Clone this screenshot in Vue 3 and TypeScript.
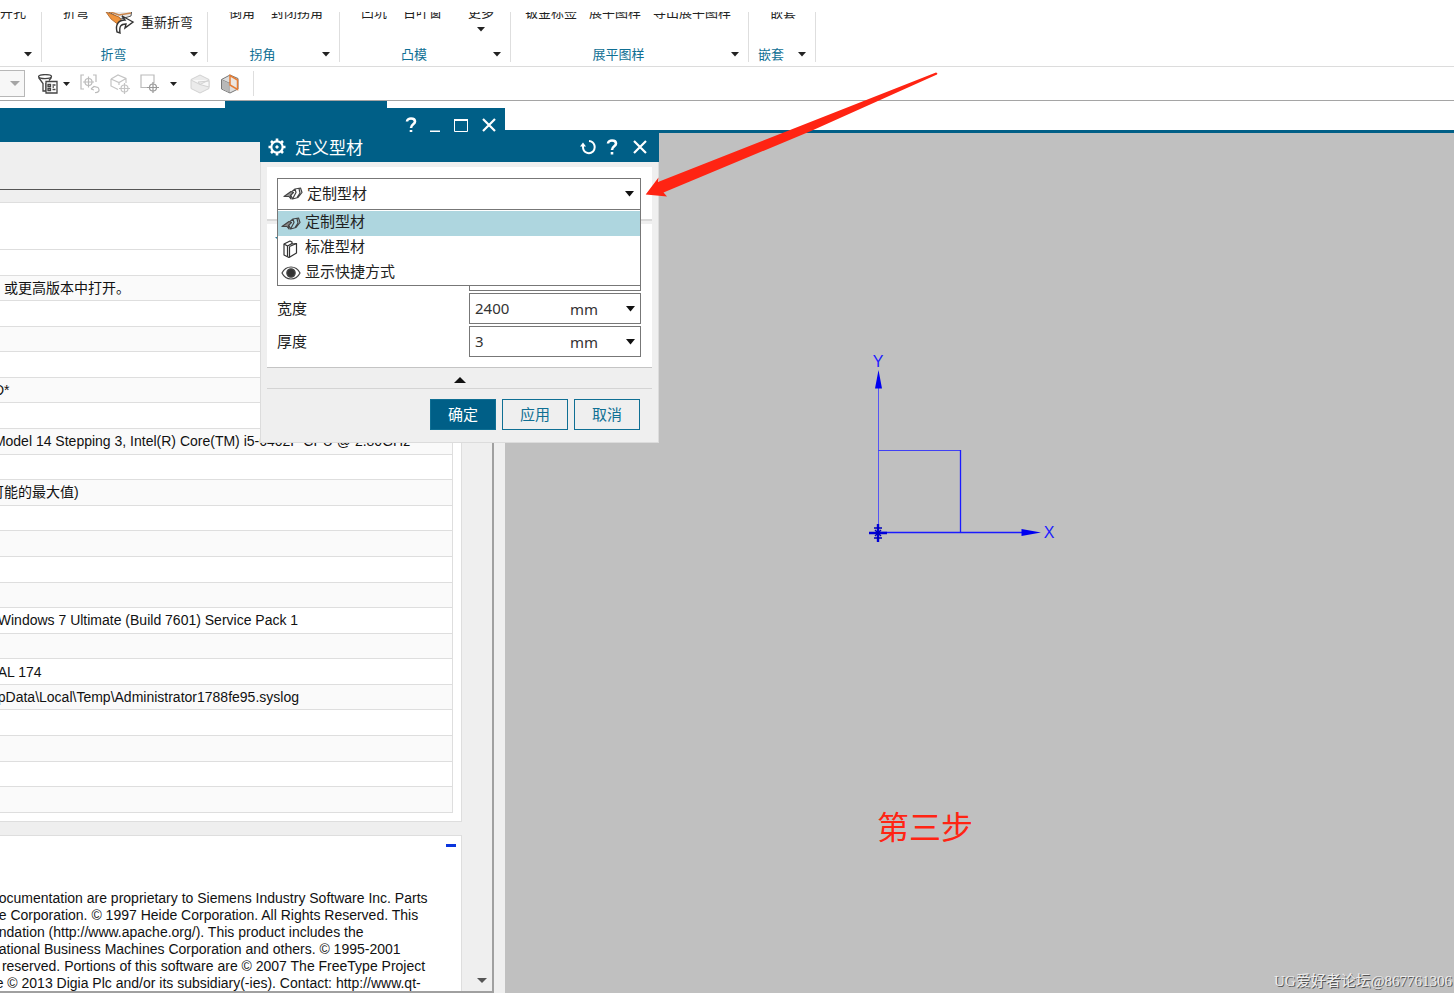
<script setup lang="ts">
import { ref } from 'vue'

interface Tool {
  label: string
  kind?: 'icon' | 'more'
}
interface Group {
  id: string
  title: string
  tools: Tool[]
}

const groups: Group[] = [
  { id: 'hole', title: '', tools: [{ label: '开孔' }] },
  { id: 'bend', title: '折弯', tools: [{ label: '折弯' }, { label: '重新折弯', kind: 'icon' }] },
  { id: 'corner', title: '拐角', tools: [{ label: '倒角' }, { label: '封闭拐角' }] },
  { id: 'punch', title: '凸模', tools: [{ label: '凹坑' }, { label: '百叶窗' }, { label: '更多', kind: 'more' }] },
  { id: 'flat', title: '展平图样', tools: [{ label: '钣金标签' }, { label: '展平图样' }, { label: '导出展平图样' }] },
  { id: 'nest', title: '嵌套', tools: [{ label: '嵌套' }] },
]

const nb = '\u00a0'
const rows: string[] = [
  '', '，或更高版本中打开。', '', '', '', nb + 'D*', '',
  nb + 'Model 14 Stepping 3, Intel(R) Core(TM) i5-6402P CPU @ 2.80GHz',
  '', '可能的最大值)', '', '', '', '',
  nb + nb + 'Windows 7 Ultimate (Build 7601) Service Pack 1',
  '', nb + nb + 'AL 174', 'ppData\\Local\\Temp\\Administrator1788fe95.syslog',
  '', '', '', '',
]

const legal: string[] = [
  'documentation are proprietary to Siemens Industry Software Inc. Parts',
  'de Corporation. © 1997 Heide Corporation. All Rights Reserved. This',
  'undation (http://www.apache.org/). This product includes the',
  'national Business Machines Corporation and others. © 1995-2001',
  's reserved. Portions of this software are © 2007 The FreeType Project',
  're © 2013 Digia Plc and/or its subsidiary(-ies). Contact: http://www.qt-',
]

const options = ['定制型材', '标准型材', '显示快捷方式']
const selected = ref(0)
const width = ref('2400')
const thickness = ref('3')
</script>

<template>
  <div class="page">
    <header class="ribbon">
      <section v-for="g in groups" :key="g.id" class="group" :class="g.id">
        <div class="tools">
          <button v-for="t in g.tools" :key="t.label" type="button" class="tool" :class="t.kind">
            <svg v-if="t.kind === 'icon'" width="30" height="28" viewBox="0 0 30 28" aria-hidden="true">
              <path d="M2 3 12 0 27 1 26 8 16 11Z" fill="#e9e9e9" stroke="#555" />
              <path d="M1 4 14 9 19 16 15 18 6 11Z" fill="#f0943c" stroke="#a8622a" stroke-width=".8" />
              <path d="M3 3 14 7 26 5" fill="none" stroke="#c98449" stroke-width="1.500" />
              <path d="M12 24C10 16 14 12 20 12L17 8 28 14 20 20 21 16C16 16 14 18 15 25Z" fill="#fff" stroke="#333" stroke-width="1.400" />
            </svg>
            <span>{{ t.label }}</span>
            <svg v-if="t.kind === 'more'" width="8" height="5" viewBox="0 0 8 5" aria-hidden="true"><path d="M0 0H8L4 4.500Z" fill="#222" /></svg>
          </button>
        </div>
        <div class="group-foot">
          <span>{{ g.title }}</span>
          <button type="button" class="foot-caret" :aria-label="g.title + '选项'">
            <svg width="8" height="5" viewBox="0 0 8 5" aria-hidden="true"><path d="M0 0H8L4 4.500Z" fill="#222" /></svg>
          </button>
        </div>
      </section>
    </header>

    <nav class="toolbar">
      <div class="scope">
        <select disabled aria-label="选择范围"></select>
        <svg width="10" height="6" viewBox="0 0 10 6" aria-hidden="true"><path d="M0 0H10L5 5Z" fill="#a5a5a5" /></svg>
      </div>
      <button type="button" class="tb with-caret" aria-label="类型过滤器">
        <svg width="20" height="20" viewBox="0 0 20 20" fill="none" stroke="#444" stroke-width="1.300">
          <ellipse cx="7" cy="2.600" rx="6.500" ry="2" />
          <path d="M.6 3.500 5 9.500V17H8V9M13.400 3.500 11 6.500" />
          <path d="M8 7.500H19V19H8Z" fill="#fff" />
          <path d="M10 10.500H12.500V12.500H10ZM10 14.500H12.500V16.500H10ZM14.500 11H17.500M14.500 13H16M14.500 15.500H17.500" />
        </svg>
        <svg width="7" height="4" viewBox="0 0 7 4"><path d="M0 0H7L3.500 4Z" fill="#222" /></svg>
      </button>
      <button type="button" class="tb" aria-label="点捕捉">
        <svg width="20" height="20" viewBox="0 0 20 20" fill="none" stroke="#bbb" stroke-width="1.200">
          <path d="M4 1H1V15H4M13 1H16V8" />
          <circle cx="8.500" cy="8" r="3.500" /><path d="M8.500 2.500V13.500M3 8H14" />
          <path d="M11 15 14 12.500 18 13.500C20 16 19 19 15 18.500M11 15 14 16" />
        </svg>
      </button>
      <button type="button" class="tb" aria-label="定位实体">
        <svg width="20" height="20" viewBox="0 0 20 20" fill="none" stroke="#c4c4c4" stroke-width="1.200">
          <path d="M1 5 8 1 16 4.500V9M1 5V12L8 15.500M1 5 9 8.500 16 4.500M9 8.500V11" />
          <circle cx="14.500" cy="14.500" r="3.500" /><path d="M14.500 9V20M9 14.500H20" />
        </svg>
      </button>
      <button type="button" class="tb with-caret wide" aria-label="矩形选择">
        <svg width="20" height="20" viewBox="0 0 20 20" fill="none" stroke-width="1.200">
          <path d="M9 13.500H1V1H14V9" stroke="#bbb" />
          <circle cx="13" cy="13.500" r="3.500" stroke="#999" /><path d="M13 8V19M7 13.500H19" stroke="#999" />
        </svg>
        <svg width="7" height="4" viewBox="0 0 7 4"><path d="M0 0H7L3.500 4Z" fill="#222" /></svg>
      </button>
      <button type="button" class="tb" aria-label="着色">
        <svg width="20" height="20" viewBox="0 0 20 20" fill="#ebebeb" stroke="#d2d2d2">
          <path d="M10 1 19 5.500V14.500L10 19 1 14.500V5.500Z" /><path d="M1 6 10 10.500 19 6M8 8 19 7V13L10 10.500Z" fill="#f8f8f8" />
        </svg>
      </button>
      <button type="button" class="tb" aria-label="截面">
        <svg width="20" height="20" viewBox="0 0 20 20" fill="none">
          <path d="M1.500 5.500 10 1 18 4.500V15L10 19 1.500 15Z" fill="#ddd" stroke="#777" />
          <path d="M1.500 5.500 9 9V18.500M9 9 12 6" stroke="#888" /><path d="M2 6 8.500 9.300V18L2 14.700Z" fill="#b8b8b8" />
          <path d="M10 1.500 17.500 6V15.500L10 11Z" fill="#ece7e2" stroke="#e67e35" stroke-width="1.500" />
        </svg>
      </button>
      <i class="divider"></i>
    </nav>

    <main class="desktop">
      <div class="tab"></div>
      <div class="strip"></div>
      <div class="canvas">
        <svg class="axes" width="200" height="200" viewBox="860 345 200 200" aria-label="坐标系">
          <g fill="none" stroke="#1a1aff">
            <path d="M878.500 532V386" stroke="#5555f5" />
            <path d="M878 450.500H960" stroke="#4040f5" />
            <path d="M960.500 450V532" stroke-width="1.300" />
            <path d="M878 532.500H1024" stroke-width="1.400" />
          </g>
          <path d="M878.500 370 882 388.500H875ZM1041 532.500 1021.500 529V536Z" fill="#0000f0" />
          <path d="M869 533H887M878 524V542" stroke="#0000d8" stroke-width="2.400" />
          <path d="M875 530 881 536M881 530 875 536M874 528H882M874 538H882" stroke="#0000b8" stroke-width="1.400" />
          <g fill="#2020ff" font-family="Liberation Sans, sans-serif" font-size="16" text-anchor="middle">
            <text x="878" y="367">Y</text>
            <text x="1049" y="538">X</text>
          </g>
        </svg>
        <p class="step">第三步</p>
        <p class="mark">UG爱好者论坛@867761306</p>
      </div>

      <section class="info">
        <div class="info-title">
          <button type="button" aria-label="帮助">
            <svg width="12" height="16" viewBox="0 0 12 16" fill="none" stroke="#fff" stroke-width="2.600"><path d="M2 4.500C2 .5 10 .5 10 4.500 10 7.500 6 7 6 11M6 13V15.500" /></svg>
          </button>
          <button type="button" aria-label="最小化">
            <svg width="12" height="16" viewBox="0 0 12 16"><path d="M1 14.500H11" stroke="#fff" stroke-width="2" /></svg>
          </button>
          <button type="button" aria-label="最大化">
            <svg width="16" height="16" viewBox="0 0 16 16" fill="none" stroke="#fff"><path d="M1.500 3V14.500H14.500V3" /><path d="M1 3H15" stroke-width="2" /></svg>
          </button>
          <button type="button" aria-label="关闭">
            <svg width="16" height="16" viewBox="0 0 16 16" stroke="#fff" stroke-width="2.200"><path d="M2 2 14 14M14 2 2 14" /></svg>
          </button>
        </div>
        <div class="info-head"></div>
        <div class="info-body">
          <div class="cards">
            <div class="card first">
              <table>
                <tbody>
                  <tr v-for="(r, i) in rows" :key="i"><td>{{ r }}</td></tr>
                </tbody>
              </table>
            </div>
            <div class="card second">
              <button type="button" class="collapse" aria-label="折叠"></button>
              <p><span v-for="l in legal" :key="l">{{ l }}</span></p>
            </div>
          </div>
          <div class="scroll">
            <svg width="10" height="5" viewBox="0 0 10 5" aria-hidden="true"><path d="M0 0H10L5 5Z" fill="#555" /></svg>
          </div>
        </div>
      </section>

      <section class="dialog" role="dialog" aria-labelledby="dlg-title">
        <div class="dlg-bar">
          <svg class="gear" width="18" height="18" viewBox="0 0 18 18" fill="none" stroke="#fff">
            <circle cx="9" cy="9" r="5.700" stroke-width="2.200" />
            <circle cx="9" cy="9" r="1.200" fill="#fff" />
            <path d="M9 .5V3.500M9 14.500V17.500M.5 9H3.500M14.500 9H17.500M3 3 5 5M13 13 15 15M15 3 13 5M3 15 5 13" stroke-width="2.600" />
          </svg>
          <h2 id="dlg-title">定义型材</h2>
          <button type="button" aria-label="重置">
            <svg width="16" height="16" viewBox="0 0 16 16" fill="none" stroke="#fff" stroke-width="2"><path d="M9 2C15 2.500 16 9 13 12.500 9 16 3 13.500 3 8V5" /><path d="M0 7.500 3 3.500 6 7.500" fill="#fff" stroke="none" /></svg>
          </button>
          <button type="button" aria-label="帮助">
            <svg width="12" height="16" viewBox="0 0 12 16" fill="none" stroke="#fff" stroke-width="2.600"><path d="M2 4.500C2 .5 10 .5 10 4.500 10 7.500 6 7 6 11M6 13V15.500" /></svg>
          </button>
          <button type="button" class="last" aria-label="关闭">
            <svg width="16" height="16" viewBox="0 0 16 16" stroke="#fff" stroke-width="2.200"><path d="M2 2 14 14M14 2 2 14" /></svg>
          </button>
        </div>
        <div class="panel type">
          <button type="button" class="combo" aria-haspopup="listbox" aria-expanded="true">
            <svg width="20" height="16" viewBox="0 0 20 16" fill="none" stroke="#444" stroke-width="1.200" stroke-linejoin="round">
              <path d="M1 10.500 8 5.500 10.500 6.500 7.500 9.500 8 13 6 10.500Z" fill="#999" />
              <path d="M9 5.500 12 3 17.500 2 19 6.500 15 11.500 9.500 13 8 9.500M12 3 13 6.500 9.500 13M16 2.500 17 7 14 11.500" />
            </svg>
            <span>{{ options[selected] }}</span>
            <svg width="9" height="6" viewBox="0 0 9 6"><path d="M0 0H9L4.500 5.500Z" fill="#111" /></svg>
          </button>
          <ul class="menu" role="listbox" aria-label="类型">
            <li v-for="(o, i) in options" :key="o" role="option" :aria-selected="i === selected" :class="{ on: i === selected }" @click="selected = i">
              <svg v-if="i === 0" width="20" height="16" viewBox="0 0 20 16" fill="none" stroke="#444" stroke-width="1.200" stroke-linejoin="round">
                <path d="M1 10.500 8 5.500 10.500 6.500 7.500 9.500 8 13 6 10.500Z" fill="#888" />
                <path d="M9 5.500 12 3 17.500 2 19 6.500 15 11.500 9.500 13 8 9.500M12 3 13 6.500 9.500 13M16 2.500 17 7 14 11.500" />
              </svg>
              <svg v-else-if="i === 1" width="20" height="18" viewBox="0 0 20 18" fill="#fff" stroke="#333" stroke-width="1.200" stroke-linejoin="round">
                <path d="M3 4 9 1 11 2 11 4 15.500 3.500V13L8 17.500 3 15Z" /><path d="M3 4 6.500 6V16.500M8.500 6.500V17M8.500 6.500 15.500 3.500M6.500 6 11 3.500" fill="none" />
              </svg>
              <svg v-else width="20" height="16" viewBox="0 0 20 16" fill="#fff" stroke="#444" stroke-width="1.200">
                <path d="M1 8C5 0 15 0 19 8 15 16 5 16 1 8Z" /><circle cx="10" cy="8" r="4.200" fill="#333" />
              </svg>
              <span>{{ o }}</span>
            </li>
          </ul>
        </div>
        <div class="panel params">
          <svg class="twisty" width="10" height="6" viewBox="0 0 10 6" aria-hidden="true"><path d="M0 0H10L5 5Z" fill="#2a7d9c" /></svg>
          <div class="hidden-field"></div>
          <div class="field">
            <label for="f-width">宽度</label>
            <div class="box">
              <input id="f-width" v-model="width" type="text" />
              <div class="unit">
                <select aria-label="宽度单位"><option>mm</option></select>
                <svg width="9" height="6" viewBox="0 0 9 6"><path d="M0 0H9L4.500 5.500Z" fill="#111" /></svg>
              </div>
            </div>
          </div>
          <div class="field">
            <label for="f-thick">厚度</label>
            <div class="box">
              <input id="f-thick" v-model="thickness" type="text" />
              <div class="unit">
                <select aria-label="厚度单位"><option>mm</option></select>
                <svg width="9" height="6" viewBox="0 0 9 6"><path d="M0 0H9L4.500 5.500Z" fill="#111" /></svg>
              </div>
            </div>
          </div>
        </div>
        <button type="button" class="fold" aria-label="收起">
          <svg width="12" height="6" viewBox="0 0 12 6"><path d="M0 6H12L6 0Z" fill="#111" /></svg>
        </button>
        <div class="actions">
          <button type="button" class="primary">确定</button>
          <button type="button">应用</button>
          <button type="button">取消</button>
        </div>
      </section>
    </main>

    <svg class="pointer" width="300" height="130" viewBox="640 70 300 130" aria-hidden="true">
      <path d="M645.700 194.500 658.500 177.500 658 182 790 130 936 72.500Q938 73 937 74.500L811 131 663.500 192.500 667 196.500Z" fill="#ff2413" />
    </svg>
  </div>
</template>

<style>
html,
body {
  margin: 0;
  background: #fff;
}
</style>

<style scoped>
.page {
  position: relative;
  display: flex;
  flex-direction: column;
  height: 100vh;
  overflow: hidden;
  box-sizing: border-box;
  padding-top: 12px;
  background: #fff;
  color: #222;
  font-family: "Noto Sans", "Noto Sans CJK SC", sans-serif;
  font-size: 15px;
}
.page * {
  box-sizing: border-box;
}
button {
  margin: 0;
  padding: 0;
  border: 0;
  background: none;
  font: inherit;
  color: inherit;
}
svg {
  display: block;
  flex: none;
}

/* ribbon */
.ribbon {
  flex: none;
  display: grid;
  grid-template-columns: 42px 166px 132px 171px 238px 67px;
  height: 55px;
  overflow: hidden;
  border-bottom: 1px solid #dcdcdc;
  font-size: 13px;
  font-family: "Noto Sans CJK SC", sans-serif;
}
.group {
  display: flex;
  flex-direction: column;
  justify-content: space-between;
  height: 50px;
  border-right: 1px solid #dedede;
}
.tools {
  display: flex;
  align-items: flex-start;
  gap: 16px;
  height: 32px;
  padding-left: 21px;
  margin-top: -8px;
  line-height: 16px;
}
.tool {
  display: flex;
  line-height: 16px;
  white-space: nowrap;
}
.tool.icon {
  gap: 6px;
  align-items: center;
  padding-top: 4px;
}
.tool.more {
  flex-direction: column;
  align-items: center;
  gap: 7px;
  padding-left: 10px;
}
.hole .tools {
  padding-left: 0;
}
.flat .tools {
  gap: 12px;
  padding-left: 14px;
}
.group-foot {
  display: flex;
  align-items: center;
  height: 16px;
  line-height: 16px;
  color: #0f6f94;
}
.group-foot span {
  flex: 1;
  text-align: center;
}
.foot-caret {
  display: flex;
  justify-content: flex-end;
  width: 22px;
  padding-right: 9px;
}

/* toolbar */
.toolbar {
  flex: none;
  display: flex;
  align-items: center;
  height: 34px;
  border-bottom: 1px solid #a5a5a5;
}
.scope {
  display: grid;
  align-items: center;
  justify-items: end;
  width: 25px;
  height: 27px;
  margin-right: 13px;
}
.scope > * {
  grid-area: 1 / 1;
}
.scope select {
  appearance: none;
  width: 100%;
  height: 100%;
  border: 1px solid #999;
  border-left: 0;
  background: #f4f4f4;
}
.scope svg {
  z-index: 1;
  margin-right: 5px;
}
.tb {
  display: flex;
  align-items: center;
  margin-right: 10px;
}
.with-caret {
  gap: 5px;
}
.with-caret.wide {
  gap: 10px;
  margin-right: 13px;
}
.divider {
  width: 1px;
  height: 25px;
  margin-left: 3px;
  background: #dedede;
}

/* desktop */
.desktop {
  position: relative;
  flex: 1;
  display: flex;
  flex-direction: column;
  min-height: 0;
}
.tab {
  position: absolute;
  top: 0;
  left: 225px;
  width: 162px;
  height: 8px;
  background: #005f87;
}
.strip {
  height: 29px;
}
.canvas {
  position: relative;
  flex: 1;
  border-top: 3px solid #005f87;
  background: #c0c0c0;
}
.axes {
  position: absolute;
  left: 860px;
  top: 212px;
}
.step {
  position: absolute;
  left: 877px;
  top: 668px;
  margin: 0;
  color: #ff2413;
  font-family: "Noto Sans CJK SC", sans-serif;
  font-size: 32px;
  line-height: 48px;
}
.mark {
  position: absolute;
  right: 2px;
  bottom: 2px;
  margin: 0;
  color: #ededed;
  font-family: "Liberation Serif", "Noto Sans CJK SC", serif;
  font-size: 15px;
  line-height: 20px;
  text-shadow: 1px 1px 0 #555;
}

/* information window */
.info {
  position: absolute;
  top: 7px;
  left: 0;
  bottom: 0;
  display: flex;
  flex-direction: column;
  width: 505px;
  background: #efefef;
  font-family: "Liberation Sans", "Noto Sans CJK SC", sans-serif;
  font-size: 14px;
  color: #111;
}
.info-title {
  flex: none;
  display: flex;
  justify-content: flex-end;
  align-items: center;
  gap: 12px;
  height: 34px;
  padding-right: 8px;
  background: #005f87;
}
.info-head {
  flex: none;
  width: 494px;
  height: 48px;
  border-bottom: 1px solid #555;
}
.info-body {
  flex: 1;
  display: flex;
  min-height: 0;
  width: 494px;
  padding-top: 12px;
  overflow: hidden;
  border-right: 2px solid #a0a0a0;
  border-bottom: 2px solid #a0a0a0;
}
.cards {
  display: flex;
  flex-direction: column;
  gap: 13px;
  width: 462px;
  overflow: hidden;
}
.card {
  flex: none;
  border: 1px solid #dedede;
  border-left: 0;
  background: #fff;
}
.first {
  padding: 46px 8px 8px 0;
}
table {
  width: 100%;
  height: 564px;
  border-collapse: collapse;
  border-right: 1px solid #dedede;
  border-bottom: 1px solid #dedede;
}
td {
  height: 25px;
  padding: 0;
  border-top: 1px solid #dedede;
  text-indent: -10px;
  white-space: pre;
  line-height: 20px;
}
tr:nth-child(even) {
  background: #fafafa;
}
.second {
  display: flex;
  flex-direction: column;
  padding-top: 8px;
}
.collapse {
  align-self: flex-end;
  width: 10px;
  height: 3px;
  margin-right: 5px;
  background: #0a35dd;
}
.second p {
  margin: 43px 0 0;
  text-indent: -9px;
  line-height: 17px;
}
.second p span {
  display: block;
  white-space: pre;
}
.scroll {
  flex: 1;
  display: flex;
  align-items: flex-end;
  justify-content: flex-end;
  padding: 0 5px 8px 0;
}

/* dialog */
.dialog {
  position: absolute;
  top: 31px;
  left: 260px;
  width: 399px;
  display: flex;
  flex-direction: column;
  padding-bottom: 12px;
  border: 1px solid #dcdcdc;
  border-top: 0;
  background: #efefef;
}
.dlg-bar {
  display: flex;
  align-items: center;
  height: 30px;
  margin: 0 -1px 5px;
  padding: 0 11px 0 8px;
  background: #005f87;
  color: #fff;
}
.dlg-bar h2 {
  flex: 1;
  margin: 0 0 0 9px;
  padding-top: 2px;
  font-size: 17px;
  font-weight: 400;
  line-height: 28px;
}
.dlg-bar button {
  margin-right: 10px;
}
.dlg-bar button.last {
  margin: 0 0 0 4px;
}
.panel {
  position: relative;
  margin: 0 6px;
  background: #fff;
}
.type {
  height: 54px;
  padding: 11px 11px 0 10px;
  border-bottom: 2px solid #d9d9d9;
}
.combo {
  display: flex;
  align-items: center;
  gap: 4px;
  width: 100%;
  height: 32px;
  padding: 0 6px 0 5px;
  border: 1px solid #777;
  background: #fff;
}
.combo span {
  flex: 1;
  padding-bottom: 4px;
  text-align: left;
}
.menu {
  position: absolute;
  z-index: 2;
  top: 42px;
  left: 10px;
  right: 11px;
  margin: 0;
  padding: 1px 0 0;
  border: 1px solid #777;
  background: #fff;
  list-style: none;
}
.menu li {
  display: flex;
  align-items: center;
  gap: 4px;
  height: 25px;
  padding-left: 3px;
  line-height: 21px;
}
.menu li span {
  padding-bottom: 4px;
}
.menu li:last-child {
  height: 24px;
}
.menu li.on {
  background: #aed6df;
}
.params {
  margin-top: 3px;
  padding: 13px 11px 10px 10px;
  border-bottom: 1px solid #c4c4c4;
}
.twisty {
  position: absolute;
  left: 8px;
  top: 13px;
}
.hidden-field {
  width: 172px;
  height: 54px;
  margin-left: auto;
  border: 1px solid #777;
}
.field {
  display: flex;
  align-items: center;
  justify-content: space-between;
  margin-top: 2px;
}
.field label {
  padding-bottom: 2px;
}
.box {
  display: flex;
  width: 172px;
  height: 31px;
  border: 1px solid #777;
  background: #fff;
}
.box input {
  width: 100px;
  min-width: 0;
  padding: 0 0 2px 5px;
  border: 0;
  outline: 0;
  background: none;
  color: #333;
  font: inherit;
}
.unit {
  flex: 1;
  display: grid;
  align-items: center;
  justify-items: end;
}
.unit > * {
  grid-area: 1 / 1;
}
.unit select {
  appearance: none;
  width: 100%;
  height: 100%;
  padding: 1px 0 0;
  border: 0;
  background: none;
  color: #333;
  font: inherit;
}
.unit svg {
  margin-right: 5px;
  pointer-events: none;
}
.fold {
  display: flex;
  justify-content: center;
  align-items: center;
  height: 21px;
  margin: 0 6px;
  padding-top: 4px;
  border-bottom: 1px solid #d4d4d4;
}
.actions {
  display: flex;
  justify-content: flex-end;
  gap: 6px;
  margin-top: 10px;
  padding-right: 18px;
}
.actions button {
  width: 66px;
  height: 31px;
  padding-bottom: 3px;
  border: 1px solid #0f6f94;
  color: #0f6f94;
}
.actions .primary {
  background: #005f87;
  color: #fff;
}
.pointer {
  position: absolute;
  left: 640px;
  top: 70px;
}
</style>
